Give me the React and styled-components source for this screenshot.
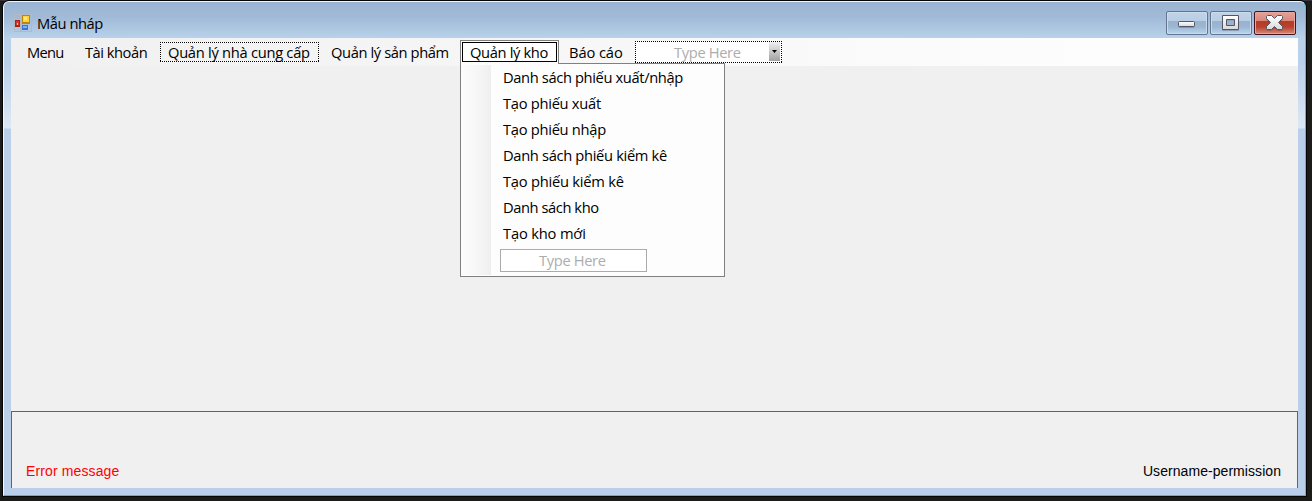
import React from "react";
import styled, { createGlobalStyle, css } from "styled-components";

const GlobalStyle = createGlobalStyle`
  * { box-sizing: border-box; }
  body { margin: 0; background: #1b1b1a; overflow: hidden; }
`;

const Desktop = styled.div`
  height: 501px;
  padding: 1px 6px 4px 3px;
  background: linear-gradient(#38343b 0 1px, #1b1b1a 1px);
  font-family: "Open Sans", "Noto Sans", sans-serif;
  font-size: 14.7px;
  color: #000;
`;

const Window = styled.div`
  height: 495px;
  display: flex;
  flex-direction: column;
  border: 1px solid;
  border-color: #eef5fc #45c3dd #3fbdd9 #f4f8fd;
  border-radius: 6px 6px 0 0;
  padding: 0 7px 7px;
  box-shadow: 0 0 0 1px #050505;
  background: linear-gradient(
    #9ab4d1 0,
    #9fb9d6 14px,
    #b9d1ea 36px,
    #bad0ea 60px,
    #dce8f5 126px,
    #bad0ea 127px
  );
`;

const TitleBar = styled.div`
  flex: 0 0 36px;
  display: flex;
  align-items: flex-start;
  padding: 9px 2px 0 3px;
`;

const AppIcon = styled.svg`
  flex: none;
  margin: 3px 5px 0 0;
  width: 18px;
  height: 18px;
`;

const Text = styled.span`
  white-space: nowrap;
  letter-spacing: ${(p) => p.$ls ?? -0.35}px;
`;

const Title = styled(Text)`
  flex: 1;
  line-height: 24px;
`;

const Controls = styled.div`
  display: flex;
  gap: 2px;
`;

const ControlButton = styled.button`
  width: 42px;
  height: 24px;
  padding: 3px 0 0 11px;
  display: flex;
  align-items: flex-start;
  border: 1px solid ${(p) => (p.$close ? "#43141f" : "#64768f")};
  border-radius: 2px;
  box-shadow: inset 0 0 0 1px ${(p) => (p.$close ? "#e5a69d" : "#c9dcef")};
  background: ${(p) =>
    p.$close
      ? "linear-gradient(#e5a298 0, #d9877a 9px, #b73a25 9px, #b8422c 15px, #d78b78 22px)"
      : "linear-gradient(#c1d3e7 0, #b8cee5 9px, #98b1cd 9px, #9db7d3 15px, #b9d5ee 22px)"};
`;

const Glyph = styled.svg`
  display: block;
  flex: none;
  width: 17px;
  height: 15px;
  filter: drop-shadow(0 1px 0 rgba(60, 70, 90, 0.3));
`;

const Client = styled.div`
  flex: 1;
  display: flex;
  flex-direction: column;
  background: #f0f0f0;
`;

const MenuStrip = styled.div`
  height: 28px;
  display: flex;
  align-items: flex-start;
  padding: 2px 0 0 8px;
  background: linear-gradient(90deg, #f0f0f0, #fdfdfd 84%);
`;

const dotted = css`
  background-image:
    repeating-linear-gradient(90deg, #000 0 1px, #fff 1px 2px),
    repeating-linear-gradient(90deg, #000 0 1px, #fff 1px 2px),
    repeating-linear-gradient(#000 0 1px, #fff 1px 2px),
    repeating-linear-gradient(#000 0 1px, #fff 1px 2px);
  background-size: 100% 1px, 100% 1px, 1px 100%, 1px 100%;
  background-position: top, bottom, left, right;
  background-repeat: no-repeat;
`;

const MenuItem = styled.div`
  width: ${(p) => p.$w}px;
  height: 20px;
  margin: 2px ${(p) => p.$gap ?? 0}px 0 0;
  padding-left: 8px;
  line-height: 20px;
  white-space: nowrap;
  ${(p) => p.$selected && dotted}
`;

const OpenItem = styled.div`
  position: relative;
  width: 99px;
  height: 24px;
  margin-right: 2px;
  padding: 1px 1px 0;
  border: 1px solid #808080;
  border-bottom: 0;
  background: #fdfdfd;
`;

const OpenLabel = styled.div`
  width: 95px;
  height: 20px;
  border: 1px solid #000;
  background: #fff;
  padding-left: 7px;
  line-height: 18px;
`;

const DropDown = styled.div`
  position: absolute;
  top: 22px;
  left: -1px;
  width: 265px;
  height: 214px;
  padding: 1px 0;
  border: 1px solid #808080;
  background: #fdfdfd;
  display: flex;

  &::before {
    content: "";
    position: absolute;
    top: -1px;
    left: 0;
    width: 97px;
    height: 1px;
    background: #fdfdfd;
  }
`;

const Gutter = styled.div`
  width: 30px;
  height: 210px;
  background: linear-gradient(90deg, #fcfcfc, #f7f7f7 50%, #efefef);
`;

const DropList = styled.div`
  flex: 1;
`;

const DropItem = styled.div`
  height: 26px;
  padding-left: 12px;
  line-height: 25px;
`;

const TypeBox = styled.div`
  width: 147px;
  height: 23px;
  margin: 2px 0 0 9px;
  padding-left: 38px;
  border: 1px solid #ababab;
  background: #fff;
  color: #adadad;
  line-height: 20px;
`;

const TypeCombo = styled.div`
  display: flex;
  justify-content: space-between;
  width: 147px;
  height: 22px;
  margin-top: 1px;
  padding: 1px 2px 1px 39px;
  line-height: 20px;
  color: #adadad;
  background-color: #fff;
  ${dotted}
`;

const ComboArrow = styled.div`
  width: 11px;
  height: 19px;
  display: grid;
  place-items: center;
  background: linear-gradient(#f0f0f0, #a0a0a0);
`;

const StatusPanel = styled.div`
  height: 77px;
  margin-top: auto;
  display: flex;
  justify-content: space-between;
  align-items: flex-end;
  padding: 0 16px 8px 14px;
  border: 1px solid #646464;
  border-bottom: 0;
  font: 14px/18px "Liberation Sans", Arial, sans-serif;
`;

const ErrorText = styled(Text)`
  color: #f00;
`;

const rows = [
  ["Danh sách phiếu xuất/nhập", -0.37],
  ["Tạo phiếu xuất", -0.28],
  ["Tạo phiếu nhập", -0.28],
  ["Danh sách phiếu kiểm kê", -0.33],
  ["Tạo phiếu kiểm kê", -0.23],
  ["Danh sách kho", -0.43],
  ["Tạo kho mới", -0.17],
];

function FormIcon() {
  return (
    <AppIcon viewBox="0 0 18 18" shapeRendering="crispEdges">
      <path d="M.5 .5h6v17h-6zM7.5 .5h10v17h-10z" fill="none" stroke="#b3b9c3" />
      <path d="M1 6h5v7H1z" fill="#b51d12" />
      <path d="M2 7h3v4H2z" fill="#cf3c2c" />
      <path d="M3 9h1v2H3z" fill="#f9c5b5" />
      <path d="M8 1h8v9H8z" fill="#bc8410" />
      <path d="M9 2h6v6H9z" fill="#ffd43b" />
      <path d="M10 3h3v3h-3z" fill="#ffe778" />
      <path d="M8 11h6v5H8z" fill="#3975d6" />
      <path d="M9 12h4v2H9z" fill="#80aff5" />
    </AppIcon>
  );
}

function GlyphFill({ id }) {
  return (
    <defs>
      <linearGradient id={id} x1="0" y1="0" x2="0" y2="1">
        <stop offset="0" stopColor="#fff" />
        <stop offset="1" stopColor="#d9d9d9" />
      </linearGradient>
    </defs>
  );
}

function MinimizeGlyph() {
  return (
    <Glyph viewBox="0 0 17 15">
      <GlyphFill id="gmin" />
      <rect x=".5" y="6.5" width="16" height="5" rx="1" fill="url(#gmin)" stroke="#535666" />
    </Glyph>
  );
}

function MaximizeGlyph() {
  return (
    <Glyph viewBox="0 0 17 15">
      <GlyphFill id="gmax" />
      <path
        fillRule="evenodd"
        d="M.5 .5h16v14H.5zM4.5 4.5v6h8v-6z"
        fill="url(#gmax)"
        stroke="#535666"
        strokeLinejoin="round"
      />
    </Glyph>
  );
}

function CloseGlyph() {
  return (
    <Glyph viewBox="0 0 17 15">
      <GlyphFill id="gclose" />
      <path
        d="M1.5 .5h4L8.5 3.5l3-3h4l1 1v2l-4 4 4 4v2l-1 1h-4l-3-3-3 3h-4l-1-1v-2l4-4-4-4v-2z"
        fill="url(#gclose)"
        stroke="#535666"
        strokeLinejoin="round"
      />
    </Glyph>
  );
}

export default function App() {
  return (
    <Desktop>
      <GlobalStyle />
      <Window>
        <TitleBar>
          <FormIcon />
          <Title $ls={-0.45}>Mẫu nháp</Title>
          <Controls>
            <ControlButton aria-label="Minimize"><MinimizeGlyph /></ControlButton>
            <ControlButton aria-label="Maximize"><MaximizeGlyph /></ControlButton>
            <ControlButton $close aria-label="Close"><CloseGlyph /></ControlButton>
          </Controls>
        </TitleBar>
        <Client>
          <MenuStrip>
            <MenuItem $w={58}><Text $ls={-0.7}>Menu</Text></MenuItem>
            <MenuItem $w={83}><Text $ls={-0.48}>Tài khoản</Text></MenuItem>
            <MenuItem $w={159} $gap={4} $selected><Text $ls={-0.28}>Quản lý nhà cung cấp</Text></MenuItem>
            <MenuItem $w={137}><Text $ls={-0.39}>Quản lý sản phẩm</Text></MenuItem>
            <OpenItem>
              <OpenLabel><Text>Quản lý kho</Text></OpenLabel>
              <DropDown>
                <Gutter />
                <DropList>
                  {rows.map(([label, ls]) => (
                    <DropItem key={label}><Text $ls={ls}>{label}</Text></DropItem>
                  ))}
                  <TypeBox><Text>Type Here</Text></TypeBox>
                </DropList>
              </DropDown>
            </OpenItem>
            <MenuItem $w={74}><Text $ls={-0.1}>Báo cáo</Text></MenuItem>
            <TypeCombo>
              <Text>Type Here</Text>
              <ComboArrow>
                <svg width="5" height="3"><path d="M0 0h5L2.5 3z" /></svg>
              </ComboArrow>
            </TypeCombo>
          </MenuStrip>
          <StatusPanel>
            <ErrorText $ls={0.12}>Error message</ErrorText>
            <Text $ls={0.06}>Username-permission</Text>
          </StatusPanel>
        </Client>
      </Window>
    </Desktop>
  );
}
